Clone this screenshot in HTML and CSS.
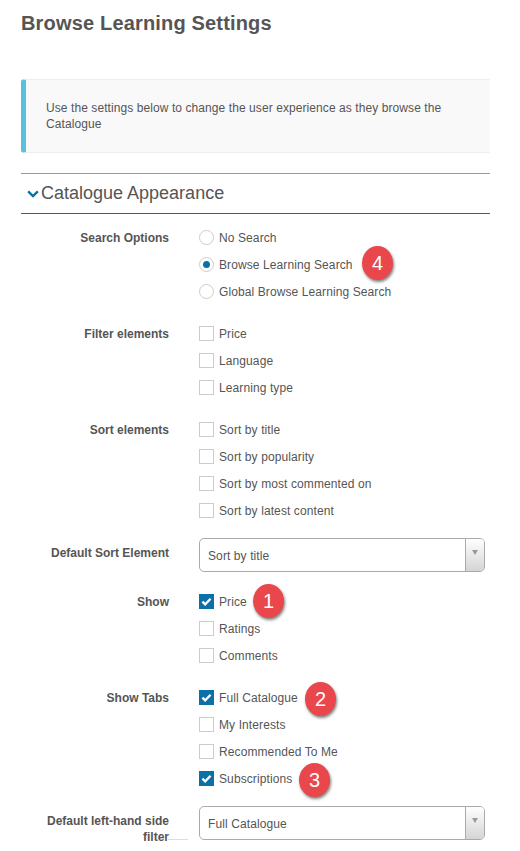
FILE: index.html
```html
<!DOCTYPE html>
<html lang="en">
<head>
<meta charset="utf-8">
<title>Browse Learning Settings</title>
<link rel="stylesheet" href="styles.css">
</head>
<body>
<main class="page">
  <h1 class="title">Browse Learning Settings</h1>
  <div class="notice">Use the settings below to change the user experience as they browse the Catalogue</div>
  <h2 class="section">
    <svg class="chev" viewBox="0 0 12 8" width="12" height="8"><path d="M1.2 1.4 6 6 10.8 1.4" fill="none" stroke="#0b6fa8" stroke-width="2.4"/></svg>
    Catalogue Appearance
  </h2>

  <div class="row">
    <div class="label">Search Options</div>
    <div class="opts">
      <div class="opt"><span class="radio"></span>No Search</div>
      <div class="opt"><span class="radio on"></span>Browse Learning Search<span class="badge b4">4</span></div>
      <div class="opt"><span class="radio"></span>Global Browse Learning Search</div>
    </div>
  </div>

  <div class="row">
    <div class="label">Filter elements</div>
    <div class="opts">
      <div class="opt"><span class="box"></span>Price</div>
      <div class="opt"><span class="box"></span>Language</div>
      <div class="opt"><span class="box"></span>Learning type</div>
    </div>
  </div>

  <div class="row">
    <div class="label">Sort elements</div>
    <div class="opts">
      <div class="opt"><span class="box"></span>Sort by title</div>
      <div class="opt"><span class="box"></span>Sort by popularity</div>
      <div class="opt"><span class="box"></span>Sort by most commented on</div>
      <div class="opt"><span class="box"></span>Sort by latest content</div>
    </div>
  </div>

  <div class="row row-select">
    <div class="label">Default Sort Element</div>
    <div class="select"><span class="select-text">Sort by title</span><span class="select-btn"><i class="caret"></i></span></div>
  </div>

  <div class="row row-after-select">
    <div class="label">Show</div>
    <div class="opts">
      <div class="opt"><span class="box on"><svg viewBox="0 0 15 15" width="15" height="15"><path d="M3.4 7.6 6.2 10.3 11.6 4.8" fill="none" stroke="#fff" stroke-width="2.3"/></svg></span>Price<span class="badge b1">1</span></div>
      <div class="opt"><span class="box"></span>Ratings</div>
      <div class="opt"><span class="box"></span>Comments</div>
    </div>
  </div>

  <div class="row">
    <div class="label">Show Tabs</div>
    <div class="opts">
      <div class="opt"><span class="box on"><svg viewBox="0 0 15 15" width="15" height="15"><path d="M3.4 7.6 6.2 10.3 11.6 4.8" fill="none" stroke="#fff" stroke-width="2.3"/></svg></span>Full Catalogue<span class="badge b2">2</span></div>
      <div class="opt"><span class="box"></span>My Interests</div>
      <div class="opt"><span class="box"></span>Recommended To Me</div>
      <div class="opt"><span class="box on"><svg viewBox="0 0 15 15" width="15" height="15"><path d="M3.4 7.6 6.2 10.3 11.6 4.8" fill="none" stroke="#fff" stroke-width="2.3"/></svg></span>Subscriptions<span class="badge b3">3</span></div>
    </div>
  </div>

  <div class="row row-last">
    <div class="label">Default left-hand side filter</div>
    <div class="select"><span class="select-text">Full Catalogue</span><span class="select-btn"><i class="caret"></i></span></div>
  </div>
</main>
</body>
</html>
```

FILE: styles.css
```css
html, body {
  margin: 0;
  height: 851px;
  overflow: hidden;
  background: #fff;
}
body {
  font-family: "Liberation Sans", Arial, sans-serif;
  font-size: 12px;
  color: #555;
}
.page {
  width: 469px;
  margin-left: 21px;
}
.title {
  margin: 0;
  padding-top: 12px;
  font-size: 20px;
  letter-spacing: .17px;
  line-height: 22px;
  font-weight: bold;
  color: #555;
}
.notice {
  box-sizing: border-box;
  margin-top: 45px;
  height: 74px;
  padding: 20px 20px 0 20px;
  background: #f9f9f9;
  border: 1px solid #eee;
  border-left: 5px solid #5bc0de;
  border-right: 0;
  border-radius: 3px 0 0 3px;
  letter-spacing: .08px;
  line-height: 16px;
  color: #555;
}
.section {
  box-sizing: border-box;
  display: flex;
  align-items: center;
  gap: 2px;
  margin: 20px 0 0;
  height: 41px;
  padding-left: 6px;
  border-top: 1px solid #999;
  border-bottom: 1px solid #0b6fa8;
  font-size: 18px;
  font-weight: normal;
  color: #555;
}
.chev { flex: none; margin-top: 1px; }
.row {
  display: flex;
  margin-top: 15px;
}
.section + .row { margin-top: 10px; }
.label {
  box-sizing: border-box;
  flex: none;
  width: 148px;
  font-weight: bold;
  line-height: 16px;
  text-align: right;
  padding-top: 6px;
}
.opts {
  margin-left: 30px;
  display: flex;
  flex-direction: column;
  letter-spacing: .1px;
}
.opt {
  position: relative;
  display: flex;
  align-items: center;
  height: 27px;
  white-space: nowrap;
}
.box, .radio {
  box-sizing: border-box;
  flex: none;
  width: 15px;
  height: 15px;
  margin-right: 5px;
  background: #fff;
  border: 1px solid #ccc;
}
.radio {
  border-radius: 50%;
  display: flex;
  align-items: center;
  justify-content: center;
}
.radio.on::after {
  content: "";
  width: 7px;
  height: 7px;
  border-radius: 50%;
  background: #0b6fa8;
}
.box.on {
  border: 0;
  background: #0b6fa8;
}
.box svg { display: block; }
.badge {
  position: absolute;
  width: 31px;
  height: 34px;
  border-radius: 50%;
  background: #e9474c;
  color: #fff;
  font-size: 20px;
  line-height: 34px;
  letter-spacing: 0;
  text-align: center;
  box-shadow: 1px 2px 3px rgba(0,0,0,.5);
}
.b4 { left: 163px; top: -5px; }
.b1 { left: 54px; top: -4px; }
.b2 { left: 106px; top: -2px; }
.b3 { left: 100px; top: -2px; }
.select {
  box-sizing: border-box;
  flex: none;
  display: flex;
  width: 286px;
  height: 34px;
  margin-left: 30px;
  border: 1px solid #aaa;
  border-radius: 5px;
  overflow: hidden;
  letter-spacing: .1px;
}
.select-text {
  flex: 1;
  padding-left: 8px;
  line-height: 34px;
}
.select-btn {
  flex: none;
  width: 18px;
  border-left: 1px solid #aaa;
  background: linear-gradient(#fff, #d4d4d4);
  display: flex;
  justify-content: center;
}
.caret {
  margin-top: 11px;
  width: 0;
  height: 0;
  border: 3px solid transparent;
  border-bottom: 0;
  border-top: 5px solid #999;
}
.row-select { margin-top: 14px; }
.row-after-select { margin-top: 16px; }
.row-select .label { padding-top: 7px; }
.row-last { margin-top: 14px; }
.row-last .label {
  position: relative;
  padding-top: 7px;
  height: 34px;
}
.row-last .label::after {
  content: "";
  position: absolute;
  left: 147px;
  top: 33px;
  width: 20px;
  height: 1px;
  background: #ddd;
}
```
